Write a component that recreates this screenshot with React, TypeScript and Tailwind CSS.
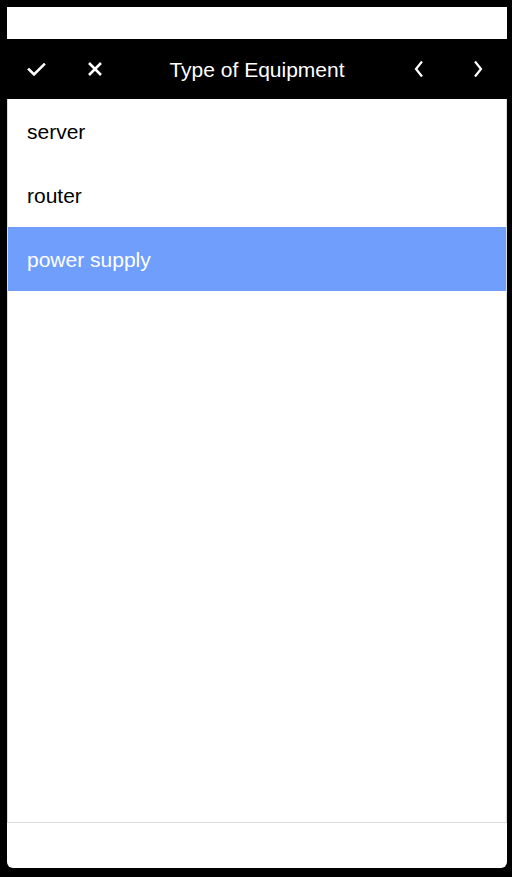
import React from "react";

const items = ["server", "router", "power supply"];

export default function App() {
  return (
    <div
      className="w-[512px] h-[877px] bg-black flex flex-col pt-[7px] pb-[9px] pl-[7px] pr-[5px]"
      style={{ fontFamily: '"Liberation Sans", Arial, Helvetica, sans-serif' }}
    >
      <div className="flex-1 flex flex-col bg-white rounded-b-[6px] overflow-hidden">
        <div className="h-[32px] bg-white" />
        <div className="h-[60px] bg-black flex items-center text-white">
          <div className="w-[120px] flex items-center">
            <span className="w-[58px] flex justify-center">
              <svg width="19" height="15" viewBox="0 0 19 15" fill="none">
                <polyline points="2,7.5 7,12.5 17,2.5" stroke="white" strokeWidth="2.6" strokeLinecap="square" />
              </svg>
            </span>
            <span className="w-[60px] flex justify-center">
              <svg width="16" height="16" viewBox="0 0 16 16" fill="none">
                <path d="M2 2 L14 14 M14 2 L2 14" stroke="white" strokeWidth="2.6" />
              </svg>
            </span>
          </div>
          <div className="flex-1 text-center text-[21px] leading-none">Type of Equipment</div>
          <div className="w-[120px] flex items-center justify-end">
            <span className="w-[60px] flex justify-center">
              <svg width="10" height="18" viewBox="0 0 10 18" fill="none">
                <polyline points="8,1.5 2,9 8,16.5" stroke="white" strokeWidth="2.2" />
              </svg>
            </span>
            <span className="w-[58px] flex justify-center">
              <svg width="10" height="18" viewBox="0 0 10 18" fill="none">
                <polyline points="2,1.5 8,9 2,16.5" stroke="white" strokeWidth="2.2" />
              </svg>
            </span>
          </div>
        </div>
        <div className="flex-1 flex flex-col border-b border-r border-l border-[#dcdcdc]">
          {items.map((it, i) => (
            <div
              key={it}
              className={
                i === 2
                  ? "h-[64px] flex items-center pl-[19px] pt-[2px] text-[21px] bg-[#6f9efc] text-white"
                  : "h-[64px] flex items-center pl-[19px] pt-[2px] text-[21px] text-black"
              }
            >
              {it}
            </div>
          ))}
        </div>
        <div className="h-[45px]" />
      </div>
    </div>
  );
}
